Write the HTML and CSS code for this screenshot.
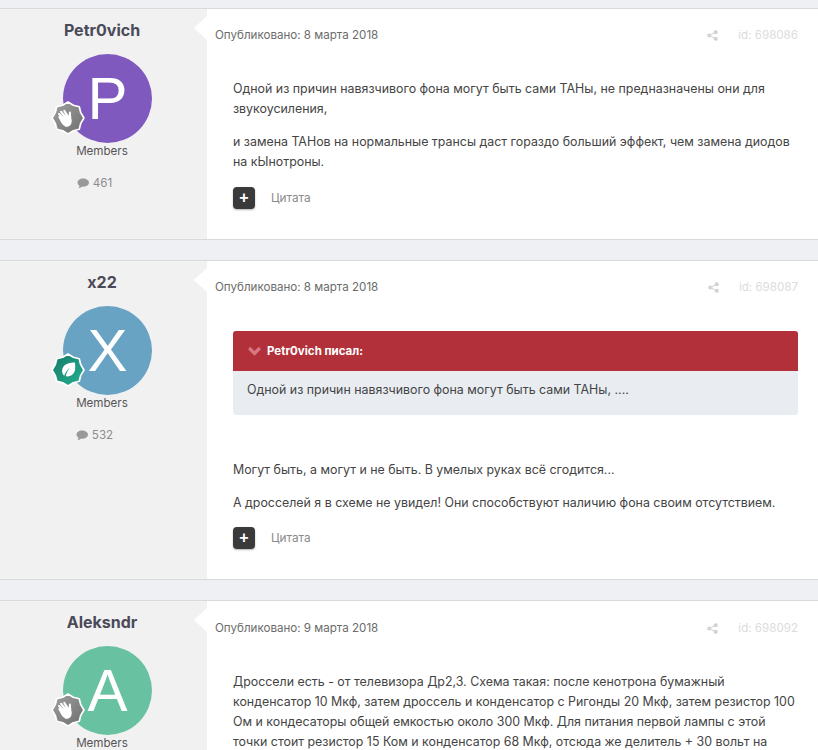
FILE: index.html
```html
<!doctype html>
<html lang="en">
  <head>
    <meta charset="UTF-8" />
    <meta name="viewport" content="width=device-width, initial-scale=1.0" />
    <title>Forum topic</title>
    <link rel="stylesheet" href="styles.css">
  </head>
  <body>
    <svg class="defs" width="0" height="0">
      <defs>
        <linearGradient id="grayFill" x1="0" y1="0" x2="1" y2="1">
          <stop offset="0" stop-color="#a0a0a0" />
          <stop offset="1" stop-color="#6e6e6e" />
        </linearGradient>
        <linearGradient id="greenFill" x1="0" y1="0" x2="1" y2="1">
          <stop offset="0" stop-color="#157a66" />
          <stop offset="1" stop-color="#25b093" />
        </linearGradient>
        <path id="badgeShape" d="M16 1L21 4 26.600 5.400 28 11 31 16 28 21 26.600 26.600 21 28 16 31 11 28 5.400 26.600 4 21 1 16 4 11 5.400 5.400 11 4z" stroke-linejoin="round" />
        <path id="handIcon" d="M13 23.500c-2-1-3-2.500-4-4.500l-2-3.500c-.5-1 .9-1.800 1.600-.9l2.400 2.900-4.200-4.700c-.8-.9.6-2.100 1.500-1.200l4 4-3.700-5c-.7-1 .8-2.100 1.600-1.100l3.800 4.500-2.300-4.400c-.6-1.100 1-2 1.600-.9l3.300 5.100.2-3c.1-1.200 1.800-1.100 1.900.1l.4 5.400c.7 2.300.6 4.600-.8 6.300-1.300 1.600-3.500 2.100-5.300 1.300z" />
        <path id="commentIcon" d="M6 .5C2.900.5.500 2.300.500 4.600c0 1.300.8 2.500 2.100 3.300-.1.800-.6 1.500-1.300 2.100 1.400 0 2.600-.6 3.500-1.300.5.100.9.100 1.400.1 3.100 0 5.800-1.800 5.800-4.200S9.100.5 6 .5z" />
      </defs>
    </svg>

    <article class="post">
      <aside class="author">
        <h3 class="author-name">Petr0vich</h3>
        <div class="avatar-wrap">
          <div class="avatar avatar-purple">P</div>
          <svg class="badge" viewBox="0 0 32 32">
            <use href="#badgeShape" fill="url(#grayFill)" stroke="#fff" stroke-width="1.600" />
            <use href="#handIcon" fill="#fff" />
          </svg>
        </div>
        <div class="author-group">Members</div>
        <div class="author-stat">
          <svg class="comment-icon" viewBox="0 0 12 11"><use href="#commentIcon" /></svg>
          <span>461</span>
        </div>
      </aside>
      <div class="post-main">
        <div class="post-meta">
          <span>Опубликовано: 8 марта 2018</span>
          <span class="post-tools">
            <svg class="share-icon" viewBox="0 0 12 12"><circle cx="9.500" cy="2.500" r="2.200" /><circle cx="9.500" cy="9.500" r="2.200" /><circle cx="2.500" cy="6" r="2.200" /><path d="M9.500 2.500L2.500 6l7 3.500" fill="none" stroke="#d9d9d9" stroke-width="1.200" /></svg>
            <span>id: 698086</span>
          </span>
        </div>
        <div class="post-body">
          <p>Одной из причин навязчивого фона могут быть сами ТАНы, не предназначены они для звукоусиления,</p>
          <p>и замена ТАНов на нормальные трансы даст гораздо больший эффект, чем замена диодов на кЫнотроны.</p>
        </div>
        <div class="post-actions">
          <button class="plus-btn">+</button>
          <span class="quote-link">Цитата</span>
        </div>
      </div>
    </article>

    <article class="post">
      <aside class="author">
        <h3 class="author-name">x22</h3>
        <div class="avatar-wrap">
          <div class="avatar avatar-blue">X</div>
          <svg class="badge" viewBox="0 0 32 32">
            <use href="#badgeShape" fill="url(#greenFill)" stroke="#fff" stroke-width="1.600" />
            <path d="M22.500 9c-6.500-.3-11.500 2.300-12 7.200-.2 2.200.6 4 2 5.200.8-3 2.700-5.500 5.300-7.300-1.900 2-3.300 4.300-3.900 7.800 4.800.8 8.400-2.200 8.800-6.500.2-2.200.2-4.400-.2-6.400z" fill="#fff" />
          </svg>
        </div>
        <div class="author-group">Members</div>
        <div class="author-stat">
          <svg class="comment-icon" viewBox="0 0 12 11"><use href="#commentIcon" /></svg>
          <span>532</span>
        </div>
      </aside>
      <div class="post-main">
        <div class="post-meta">
          <span>Опубликовано: 8 марта 2018</span>
          <span class="post-tools">
            <svg class="share-icon" viewBox="0 0 12 12"><circle cx="9.500" cy="2.500" r="2.200" /><circle cx="9.500" cy="9.500" r="2.200" /><circle cx="2.500" cy="6" r="2.200" /><path d="M9.500 2.500L2.500 6l7 3.500" fill="none" stroke="#d9d9d9" stroke-width="1.200" /></svg>
            <span>id: 698087</span>
          </span>
        </div>
        <div class="post-body">
          <blockquote class="quote">
            <div class="quote-head">
              <svg class="quote-chevron" viewBox="0 0 14 10"><path d="M0 3l2.500-2.500L7 5l4.500-4.500L14 3 7 10z" /></svg>
              <span>Petr0vich писал:</span>
            </div>
            <div class="quote-text">Одной из причин навязчивого фона могут быть сами ТАНы, ....</div>
          </blockquote>
          <p>Могут быть, а могут и не быть. В умелых руках всё сгодится...</p>
          <p>А дросселей я в схеме не увидел! Они способствуют наличию фона своим отсутствием.</p>
        </div>
        <div class="post-actions">
          <button class="plus-btn">+</button>
          <span class="quote-link">Цитата</span>
        </div>
      </div>
    </article>

    <article class="post">
      <aside class="author">
        <h3 class="author-name">Aleksndr</h3>
        <div class="avatar-wrap">
          <div class="avatar avatar-green">A</div>
          <svg class="badge" viewBox="0 0 32 32">
            <use href="#badgeShape" fill="url(#grayFill)" stroke="#fff" stroke-width="1.600" />
            <use href="#handIcon" fill="#fff" />
          </svg>
        </div>
        <div class="author-group">Members</div>
      </aside>
      <div class="post-main">
        <div class="post-meta">
          <span>Опубликовано: 9 марта 2018</span>
          <span class="post-tools">
            <svg class="share-icon" viewBox="0 0 12 12"><circle cx="9.500" cy="2.500" r="2.200" /><circle cx="9.500" cy="9.500" r="2.200" /><circle cx="2.500" cy="6" r="2.200" /><path d="M9.500 2.500L2.500 6l7 3.500" fill="none" stroke="#d9d9d9" stroke-width="1.200" /></svg>
            <span>id: 698092</span>
          </span>
        </div>
        <div class="post-body">
          <p>Дроссели есть - от телевизора Др2,3. Схема такая: после кенотрона бумажный конденсатор 10 Мкф, затем дроссель и конденсатор с Ригонды 20 Мкф, затем резистор 100 Ом и кондесаторы общей емкостью около 300 Мкф. Для питания первой лампы с этой точки стоит резистор 15 Ком и конденсатор 68 Мкф, отсюда же делитель + 30 вольт на</p>
        </div>
      </div>
    </article>
  </body>
</html>
```

FILE: styles.css
```css
html, body {
  height: 100vh;
  overflow: hidden;
}
body {
  margin: 0;
  padding-top: 8px;
  box-sizing: border-box;
  background: #eef0f4;
  font-family: Inter, "Noto Sans", sans-serif;
  font-size: 12.4px;
  line-height: 20px;
  color: #444;
}
.defs {
  position: absolute;
}
.post {
  display: flex;
  background: #fff;
  border-top: 1px solid #d9dade;
  border-bottom: 1px solid #d9dade;
  margin-bottom: 20px;
}

/* Left column */
.author {
  width: 207px;
  flex-shrink: 0;
  box-sizing: border-box;
  padding: 10px 3px 0 0;
  background: #f1f1f2;
  text-align: center;
  position: relative;
}
.author::after {
  content: "";
  position: absolute;
  top: 7px;
  right: 0;
  border: 12px solid transparent;
  border-left: 0;
  border-right-width: 13px;
  border-right-color: #fff;
}
.author-name {
  margin: 0;
  font-size: 16px;
  line-height: 22px;
  font-weight: 700;
  color: #4a4a58;
}
.avatar-wrap {
  position: relative;
  width: 89px;
  margin: 13px 0 0 63px;
}
.avatar {
  width: 89px;
  height: 89px;
  border-radius: 50%;
  color: #fff;
  font-family: "Liberation Sans", sans-serif;
  font-size: 60px;
  line-height: 89px;
}
.avatar-purple { background: #8059bf; }
.avatar-blue { background: #68a3c4; }
.avatar-green { background: #68c2a2; }
.badge {
  position: absolute;
  left: -12px;
  top: 47px;
  width: 34px;
  height: 34px;
}
.author-group {
  font-size: 11.600px;
  line-height: 16px;
  color: #555;
}
.author-stat {
  display: flex;
  align-items: center;
  justify-content: center;
  gap: 4px;
  margin: 16px 15px 0 0;
  font-size: 11.600px;
  line-height: 16px;
  color: #8c8c8c;
}
.comment-icon {
  width: 12px;
  height: 11px;
  fill: #999;
}

/* Post column */
.post-main {
  flex: 1;
  min-width: 0;
  padding: 16px 20px 30px 8px;
}
.post:last-child .post-main {
  padding-top: 17px;
}
.post-meta {
  display: flex;
  justify-content: space-between;
  font-size: 11.600px;
  color: #6b6b6b;
}
.post-tools {
  display: flex;
  align-items: center;
  gap: 20px;
  color: #dcdcdc;
}
.share-icon {
  width: 11px;
  height: 11px;
  fill: #d0d0d0;
}
.post-body {
  margin: 34px 0 0 18px;
}
.post-body p {
  margin: 0 0 13px;
}
.post-actions {
  display: flex;
  align-items: center;
  gap: 16px;
  margin: 15px 0 0 18px;
}
.post-body:has(.quote) + .post-actions {
  margin-top: 14px;
}
.plus-btn {
  width: 22px;
  height: 22px;
  padding: 0;
  border: 0;
  border-radius: 4px;
  background: #3a3a3a;
  color: #fff;
  font-family: "Liberation Sans", sans-serif;
  font-size: 16px;
  font-weight: 700;
  line-height: 22px;
  box-shadow: 0 1px 2px rgba(0, 0, 0, 0.3);
}
.quote-link {
  font-size: 11.800px;
  color: #8a8a8a;
}

/* Quote box */
.quote {
  margin: 0 0 45px;
  border-radius: 3px;
  overflow: hidden;
  background: #e9edf2;
}
.quote-head {
  display: flex;
  align-items: center;
  gap: 6px;
  height: 40px;
  padding-left: 15px;
  background: #b1303a;
  color: #fff;
  font-size: 11.500px;
  font-weight: 700;
}
.quote-chevron {
  width: 13px;
  height: 10px;
  fill: #d9777f;
}
.quote-text {
  padding: 9px 14px 15px;
}
```
